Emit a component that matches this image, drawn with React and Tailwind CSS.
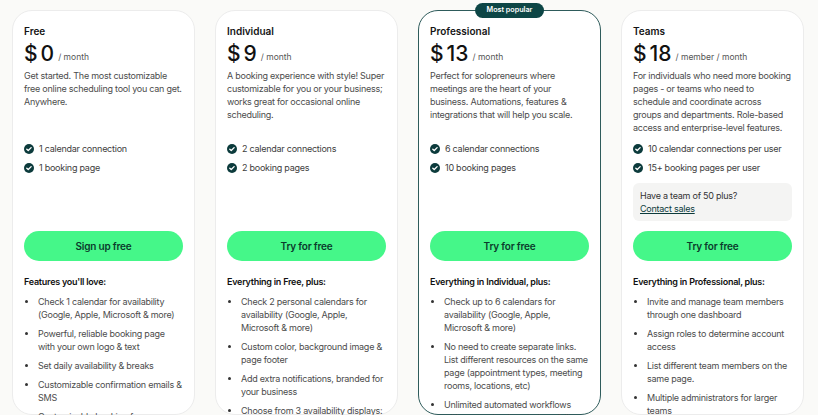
import React from "react";

const plans = [
  {
    name: "Free",
    price: "0",
    unit: "/ month",
    desc: "Get started. The most customizable free online scheduling tool you can get. Anywhere.",
    checks: ["1 calendar connection", "1 booking page"],
    cta: "Sign up free",
    heading: "Features you'll love:",
    features: [
      "Check 1 calendar for availability (Google, Apple, Microsoft & more)",
      "Powerful, reliable booking page with your own logo & text",
      "Set daily availability & breaks",
      "Customizable confirmation emails & SMS",
      "Customizable booking form",
    ],
  },
  {
    name: "Individual",
    price: "9",
    unit: "/ month",
    desc: "A booking experience with style! Super customizable for you or your business; works great for occasional online scheduling.",
    checks: ["2 calendar connections", "2 booking pages"],
    cta: "Try for free",
    heading: "Everything in Free, plus:",
    features: [
      "Check 2 personal calendars for availability (Google, Apple, Microsoft & more)",
      "Custom color, background image & page footer",
      "Add extra notifications, branded for your business",
      "Choose from 3 availability displays: list, calendar or grid",
    ],
  },
  {
    name: "Professional",
    price: "13",
    unit: "/ month",
    popular: true,
    desc: "Perfect for solopreneurs where meetings are the heart of your business. Automations, features & integrations that will help you scale.",
    checks: ["6 calendar connections", "10 booking pages"],
    cta: "Try for free",
    heading: "Everything in Individual, plus:",
    features: [
      "Check up to 6 calendars for availability (Google, Apple, Microsoft & more)",
      "No need to create separate links. List different resources on the same page (appointment types, meeting rooms, locations, etc)",
      "Unlimited automated workflows with customized reminders, follow-ups and more",
    ],
  },
  {
    name: "Teams",
    price: "18",
    unit: "/ member / month",
    desc: "For individuals who need more booking pages - or teams who need to schedule and coordinate across groups and departments. Role-based access and enterprise-level features.",
    checks: ["10 calendar connections per user", "15+ booking pages per user"],
    contact: true,
    cta: "Try for free",
    heading: "Everything in Professional, plus:",
    features: [
      "Invite and manage team members through one dashboard",
      "Assign roles to determine account access",
      "List different team members on the same page.",
      "Multiple administrators for larger teams",
      "Shared booking pages",
    ],
  },
];

function Check() {
  return (
    <svg width="10" height="10" viewBox="0 0 16 16" className="shrink-0">
      <circle cx="8" cy="8" r="8" fill="#0c3b3c" />
      <path d="M4.5 8.3l2.3 2.2 4.6-4.7" fill="none" stroke="#fff" strokeWidth="2.2" strokeLinecap="round" strokeLinejoin="round" />
    </svg>
  );
}

function Card({ p }) {
  return (
    <div
      className={`relative w-[183px] shrink-0 rounded-[20px] bg-white px-[11px] pt-[13px] pb-6 border ${
        p.popular ? "border-[#2e5b5b]" : "border-[#ececec]"
      }`}
    >
      {p.popular && (
        <div className="absolute left-1/2 top-[-8px] -translate-x-1/2 rounded-full bg-[#0d4646] px-[12px] h-[15px] flex items-center text-[7.2px] font-semibold text-white whitespace-nowrap">
          Most popular
        </div>
      )}
      <div className="text-[10px] leading-[14px] font-semibold text-[#141414]">{p.name}</div>
      <div className="mt-[4px] flex items-end h-[24px]">
        <span className="text-[21px] leading-[24px] font-medium text-[#111]">$</span>
        <span className="ml-[3px] text-[21px] leading-[24px] font-medium text-[#111]">{p.price}</span>
        <span className="ml-[4px] mb-[3px] text-[8.5px] leading-[12px] text-[#555]">{p.unit}</span>
      </div>
      <div className="mt-[3px] h-[73px] pr-[1px] text-[9px] tracking-[-0.25px] leading-[13px] text-[#4c4c4c]">{p.desc}</div>
      <div className="h-[89px] flex flex-col">
        <div className="flex flex-col gap-[6px]">
          {p.checks.map((c) => (
            <div key={c} className="flex items-center gap-[5px] h-[13px] text-[9px] tracking-[-0.25px] text-[#404040]">
              <Check />
              <span>{c}</span>
            </div>
          ))}
        </div>
        {p.contact && (
          <div className="mt-[9px] rounded-[6px] bg-[#f4f4f3] px-[7px] py-[6px] text-[9px] tracking-[-0.25px] leading-[13px] text-[#333]">
            <div>Have a team of 50 plus?</div>
            <div className="underline text-[#0c3b3c]">Contact sales</div>
          </div>
        )}
      </div>
      <button className="w-full h-[30px] rounded-full bg-[#45f789] text-[10px] tracking-[-0.2px] font-semibold text-[#0b3b2c]">
        {p.cta}
      </button>
      <div className="mt-[14px] text-[9px] tracking-[-0.25px] leading-[14px] font-semibold text-[#111]">{p.heading}</div>
      <ul className="mt-[6px] list-disc pl-[14px] pr-[1px] flex flex-col gap-[6px] text-[9px] tracking-[-0.25px] leading-[13px] text-[#4c4c4c] marker:text-[#333]">
        {p.features.map((f) => (
          <li key={f}>{f}</li>
        ))}
      </ul>
    </div>
  );
}

export default function App() {
  return (
    <div
      className="w-[818px] h-[415px] overflow-hidden bg-[#fafaf8] flex gap-5 pl-3 pt-[10px]"
      style={{ fontFamily: "Inter, 'Noto Sans', sans-serif" }}
    >
      {plans.map((p) => (
        <Card key={p.name} p={p} />
      ))}
    </div>
  );
}
